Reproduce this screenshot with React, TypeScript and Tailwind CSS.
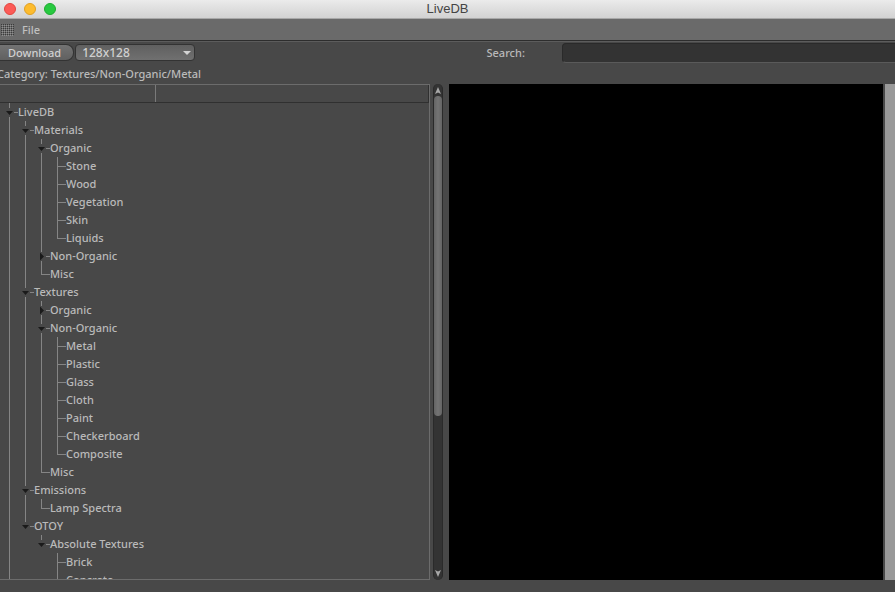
import { useState } from 'react';

type TNode = {
  name: string;
  children?: TNode[];
  collapsed?: boolean;
};

const leaves = (...names: string[]): TNode[] => names.map((name) => ({ name }));

const library: TNode = {
  name: 'LiveDB',
  children: [
    {
      name: 'Materials',
      children: [
        {
          name: 'Organic',
          children: leaves('Stone', 'Wood', 'Vegetation', 'Skin', 'Liquids'),
        },
        { name: 'Non-Organic', children: [], collapsed: true },
        { name: 'Misc' },
      ],
    },
    {
      name: 'Textures',
      children: [
        { name: 'Organic', children: [], collapsed: true },
        {
          name: 'Non-Organic',
          children: leaves(
            'Metal',
            'Plastic',
            'Glass',
            'Cloth',
            'Paint',
            'Checkerboard',
            'Composite'
          ),
        },
        { name: 'Misc' },
      ],
    },
    { name: 'Emissions', children: leaves('Lamp Spectra') },
    {
      name: 'OTOY',
      children: [
        { name: 'Absolute Textures', children: leaves('Brick', 'Concrete') },
      ],
    },
  ],
};

type TBranch = { kind: 'leaf' | 'open' | 'closed'; last: boolean };

// Connector lines and arrow in front of a tree label
const Branch: React.FC<TBranch> = ({ kind, last }) => (
  <svg width="17" height="18" className="shrink-0" aria-hidden="true">
    <g fill="#858585">
      <rect x="8" y="0" width="1" height={kind === 'leaf' ? 10 : 5} />
      {!last && (
        <rect
          x="8"
          y={kind === 'leaf' ? 9 : 14}
          width="1"
          height={kind === 'leaf' ? 9 : 4}
        />
      )}
      <rect
        x={kind === 'leaf' ? 8 : 13}
        y="9"
        width={kind === 'leaf' ? 9 : 4}
        height="1"
      />
    </g>
    {kind === 'open' && <path d="M5 8h7l-3.5 4z" fill="#1a1a1a" />}
    {kind === 'closed' && <path d="M7 5.5l4 4-4 4z" fill="#1a1a1a" />}
  </svg>
);

type TTreeItem = { node: TNode; last: boolean; guides: boolean[] };

const TreeItem: React.FC<TTreeItem> = ({ node, last, guides }) => {
  const [open, setOpen] = useState(!node.collapsed);
  const kind = !node.children ? 'leaf' : open ? 'open' : 'closed';

  return (
    <li>
      <button
        type="button"
        className="flex h-[18px] items-center whitespace-nowrap"
        onClick={() => setOpen(!open)}
      >
        {guides.map((line, i) => (
          <span key={i} className="h-full w-4 shrink-0 pl-2">
            {line && <span className="block h-full w-px bg-[#858585]" />}
          </span>
        ))}
        <Branch kind={kind} last={last} />
        <span>{node.name}</span>
      </button>
      {open && node.children && (
        <ul>
          {node.children.map((child, i, all) => (
            <TreeItem
              key={child.name}
              node={child}
              last={i === all.length - 1}
              guides={[...guides, !last]}
            />
          ))}
        </ul>
      )}
    </li>
  );
};

const TitleBar = () => (
  <header className="grid h-[19px] shrink-0 grid-cols-[1fr_auto_1fr] items-center border-b border-[#a8a8a8] bg-linear-to-b from-[#ebebeb] to-[#d2d2d2]">
    <div className="flex gap-2 pl-1">
      <button
        type="button"
        aria-label="Close"
        className="size-3 rounded-full border border-[#e2463f] bg-[#fc5b57]"
      />
      <button
        type="button"
        aria-label="Minimize"
        className="size-3 rounded-full border border-[#e0a023] bg-[#fdbc2e]"
      />
      <button
        type="button"
        aria-label="Zoom"
        className="size-3 rounded-full border border-[#1eab30] bg-[#28c940]"
      />
    </div>
    <h1 className="font-['Liberation_Sans',sans-serif] text-[13px] leading-4 font-normal text-[#444444]">
      LiveDB
    </h1>
  </header>
);

const MenuBar = () => (
  <nav className="flex h-[22px] shrink-0 items-center gap-2 border-b border-[#2d2d2d] bg-[#6a6a6a] pl-px">
    <svg width="13" height="12" aria-hidden="true">
      <defs>
        <pattern id="grip" width="2" height="2" patternUnits="userSpaceOnUse">
          <rect width="1" height="1" fill="#3c3c3c" />
          <rect x="1" y="1" width="1" height="1" fill="#8f8f8f" />
        </pattern>
      </defs>
      <rect width="13" height="12" fill="url(#grip)" />
    </svg>
    <button type="button" className="text-[#c0c0c0]">
      File
    </button>
  </nav>
);

const Toolbar = () => (
  <div className="flex h-[22px] shrink-0 items-center border-t border-[#5c5c5c]">
    <div className="flex w-1/2 items-center gap-px">
      <button
        type="button"
        className="h-[17px] rounded-r-lg border border-l-0 border-[#333333] bg-linear-to-b from-[#737373] to-[#606060] pr-3 pl-2 leading-[15px] text-[#d0d0d0]"
      >
        Download
      </button>
      <div className="relative w-[120px]">
        <select
          aria-label="Texture size"
          className="block h-[17px] w-full appearance-none rounded-sm border border-[#333333] bg-linear-to-b from-[#606060] to-[#707070] pl-[6px] text-[12px] leading-[15px] text-[#d0d0d0]"
        >
          <option>128x128</option>
        </select>
        <svg
          width="8"
          height="4"
          className="pointer-events-none absolute top-[7px] right-1"
          aria-hidden="true"
        >
          <path d="M0 0h8l-4 4z" fill="#d4d4d4" />
        </svg>
      </div>
    </div>
    <div className="flex w-1/2 items-center pl-[39px]">
      <label htmlFor="search" className="w-[75px] shrink-0">
        Search:
      </label>
      <input
        id="search"
        type="text"
        className="h-5 min-w-0 flex-1 rounded-l-sm border border-r-0 border-[#2a2a2a] border-b-[#5a5a5a] bg-[#333333] px-1 outline-none"
      />
    </div>
  </div>
);

const ScrollBar = () => (
  <div className="flex w-[10px] shrink-0 flex-col items-center rounded-full border-x border-[#2a2a2a] bg-[#333333]">
    <button type="button" aria-label="Scroll up" className="pt-[3px] pb-[2px]">
      <svg width="6" height="7" className="block" aria-hidden="true">
        <path d="M3 0l3 7-3-1.5L0 7z" fill="#a8a8a8" />
      </svg>
    </button>
    <div className="h-20/31 w-full rounded-md bg-linear-to-r from-[#646464] via-[#747474] to-[#646464]" />
    <button type="button" aria-label="Scroll down" className="mt-auto pb-[3px]">
      <svg width="6" height="7" className="block" aria-hidden="true">
        <path d="M3 7l3-7-3 1.5L0 0z" fill="#a8a8a8" />
      </svg>
    </button>
  </div>
);

const LibraryPanel = () => (
  <section className="flex w-1/2 gap-[3px] pr-[5px]">
    <div className="flex min-w-0 flex-1 flex-col border-r border-b border-[#6c6c6c]">
      <div className="flex h-[19px] shrink-0 border-t border-b border-t-[#6c6c6c] border-b-[#303030]">
        <div className="w-[156px] border-r border-[#7a7a7a]" />
        <div className="flex-1 border-r border-[#303030]" />
      </div>
      <div className="min-h-0 flex-1 overflow-hidden pl-px">
        <ul>
          <TreeItem node={library} last={false} guides={[]} />
        </ul>
      </div>
    </div>
    <ScrollBar />
  </section>
);

const App: React.FC = () => {
  return (
    <div className="flex h-screen flex-col overflow-hidden bg-[#484848] font-['Noto_Sans',sans-serif] text-[11px] leading-4 font-medium text-[#bababa]">
      <TitleBar />
      <MenuBar />
      <Toolbar />
      <p className="-ml-[3px] h-[21px] shrink-0 pt-[3px]">
        Category: Textures/Non-Organic/Metal
      </p>
      <main className="flex min-h-0 flex-1 pb-3">
        <LibraryPanel />
        <section className="flex w-1/2 gap-[2px] pl-px" aria-label="Preview">
          <div className="flex-1 bg-black" />
          <div className="w-[10px] bg-[#999999]" />
        </section>
      </main>
    </div>
  );
};

export default App;
